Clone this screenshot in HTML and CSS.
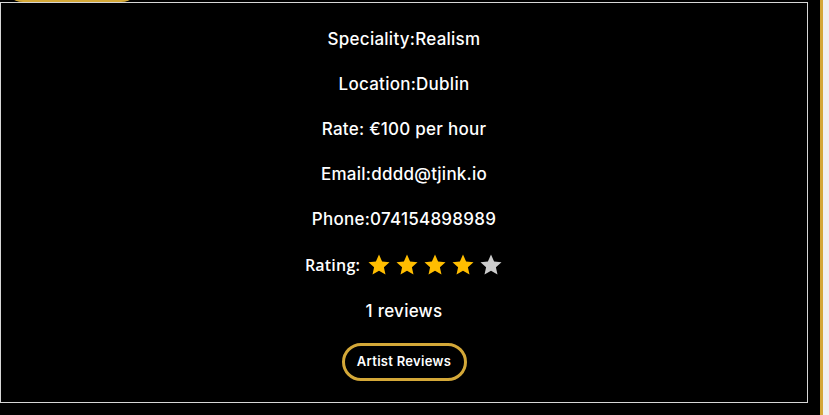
FILE: index.html
```html
<!DOCTYPE html>
<html>
<head>
<meta charset="utf-8">
<link rel="stylesheet" href="styles.css">
</head>
<body>
<div class="page">
  <main class="main">
    <div class="prev-btn"></div>
    <section class="card">
      <p class="row">Speciality:Realism</p>
      <p class="row">Location:Dublin</p>
      <p class="row">Rate: €100 per hour</p>
      <p class="row">Email:dddd@tjink.io</p>
      <p class="row">Phone:074154898989</p>
      <div class="rating">
        <span class="rating-label">Rating:</span>
        <span class="stars">
          <svg class="star on" viewBox="0 0 24 24"><path d="M12 1.5l3.1 6.9 7.4.8-5.6 5 1.6 7.4L12 17.8l-6.5 3.8 1.6-7.4-5.6-5 7.4-.8z"/></svg>
          <svg class="star on" viewBox="0 0 24 24"><path d="M12 1.5l3.1 6.9 7.4.8-5.6 5 1.6 7.4L12 17.8l-6.5 3.8 1.6-7.4-5.6-5 7.4-.8z"/></svg>
          <svg class="star on" viewBox="0 0 24 24"><path d="M12 1.5l3.1 6.9 7.4.8-5.6 5 1.6 7.4L12 17.8l-6.5 3.8 1.6-7.4-5.6-5 7.4-.8z"/></svg>
          <svg class="star on" viewBox="0 0 24 24"><path d="M12 1.5l3.1 6.9 7.4.8-5.6 5 1.6 7.4L12 17.8l-6.5 3.8 1.6-7.4-5.6-5 7.4-.8z"/></svg>
          <svg class="star off" viewBox="0 0 24 24"><path d="M12 1.5l3.1 6.9 7.4.8-5.6 5 1.6 7.4L12 17.8l-6.5 3.8 1.6-7.4-5.6-5 7.4-.8z"/></svg>
        </span>
      </div>
      <p class="row reviews">1 reviews</p>
      <button class="btn">Artist Reviews</button>
    </section>
  </main>
  <div class="gap"></div>
  <div class="gold-bar"></div>
  <div class="edge"></div>
</div>
</body>
</html>
```

FILE: styles.css
```css
html, body {
  margin: 0;
  padding: 0;
  background: #000;
  height: 100%;
  overflow: hidden;
}
.page {
  display: grid;
  grid-template-columns: 808px 12px 3px 1fr;
  height: 415px;
  background: #000;
}
.main {
  display: flex;
  flex-direction: column;
}
.prev-btn {
  width: 138px;
  height: 40px;
  margin-top: -38px;
  margin-left: 3px;
  border-radius: 20px;
  background: #d4a838;
}
.card {
  box-sizing: border-box;
  width: 808px;
  height: 401px;
  border: 1px solid #d6d6d6;
  display: flex;
  flex-direction: column;
  align-items: center;
  padding-top: 26px;
  gap: 25px;
  font-family: Inter, "Liberation Sans", sans-serif;
  color: #fff;
}
.row {
  margin: 0;
  height: 20px;
  line-height: 20px;
  font-size: 17px;
  font-weight: 500;
  letter-spacing: 0.25px;
}
.rating {
  height: 22px;
  display: flex;
  align-items: center;
  gap: 7px;
}
.rating-label {
  font-family: "Open Sans", "Noto Sans", sans-serif;
  font-size: 16px;
  font-weight: 600;
  letter-spacing: 0.2px;
}
.stars {
  display: flex;
  gap: 4px;
}
.star {
  width: 24px;
  height: 24px;
}
.star.on { fill: #ffbd00; }
.star.off { fill: #cccccc; }
.btn {
  margin-top: -3px;
  box-sizing: border-box;
  width: 125px;
  height: 38px;
  border: 3px solid #d4a838;
  border-radius: 19px;
  background: #000;
  color: #fff;
  font-family: Inter, "Liberation Sans", sans-serif;
  font-size: 13px;
  font-weight: 600;
  letter-spacing: 0.3px;
  padding: 0 0 3px;
}
.gold-bar {
  background: #d4a838;
}
.edge {
  background: #f1f1f1;
}
```
